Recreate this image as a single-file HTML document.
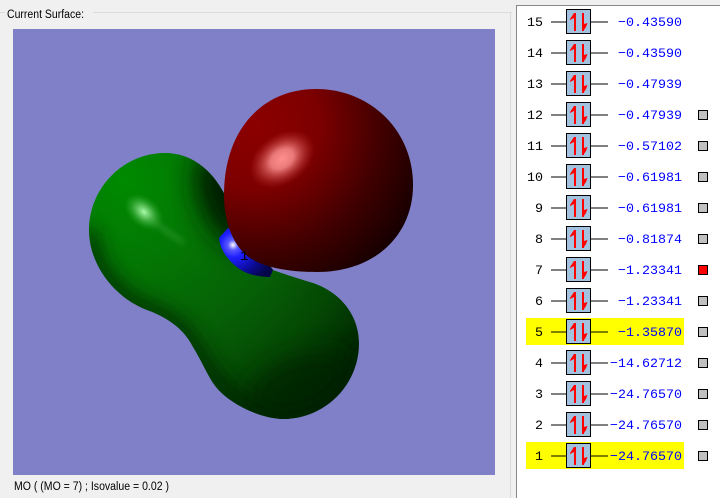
<!DOCTYPE html>
<html><head><meta charset="utf-8"><style>
html,body{margin:0;padding:0;background:#f0f0f0;width:720px;height:498px;overflow:hidden}
svg{display:block}
.m{font-family:"Liberation Mono",monospace;font-size:13.33px}
.s{font-family:"Liberation Sans",sans-serif;font-size:11.5px;fill:#000}
.v{fill:#0000ff;text-anchor:end}
.n{fill:#000;text-anchor:end}
</style></head><body>
<svg width="720" height="498" viewBox="0 0 720 498" xmlns="http://www.w3.org/2000/svg">
<defs>
<radialGradient id="g1" gradientUnits="userSpaceOnUse" cx="125" cy="180" r="310">
<stop offset="0" stop-color="#008a00"/><stop offset=".25" stop-color="#037803"/><stop offset=".55" stop-color="#065f06"/><stop offset=".75" stop-color="#044804"/><stop offset="1" stop-color="#011c01"/></radialGradient>
<radialGradient id="r1" gradientUnits="userSpaceOnUse" cx="255" cy="125" r="185">
<stop offset="0" stop-color="#8c0000"/><stop offset=".35" stop-color="#7c0000"/><stop offset=".7" stop-color="#3e0000"/><stop offset="1" stop-color="#120000"/></radialGradient>
<radialGradient id="b1" gradientUnits="userSpaceOnUse" cx="233" cy="245" r="42">
<stop offset="0" stop-color="#ffffff"/><stop offset=".12" stop-color="#5a5aff"/><stop offset=".3" stop-color="#1e1eff"/><stop offset=".7" stop-color="#0a0a90"/><stop offset="1" stop-color="#05054a"/></radialGradient>
<radialGradient id="h1"><stop offset="0" stop-color="#ff9090"/><stop offset=".35" stop-color="#f58585" stop-opacity=".9"/><stop offset="1" stop-color="#c03030" stop-opacity="0"/></radialGradient>
<radialGradient id="h2"><stop offset="0" stop-color="#a8ffa8"/><stop offset=".35" stop-color="#70d070" stop-opacity=".8"/><stop offset="1" stop-color="#20a020" stop-opacity="0"/></radialGradient>
<filter id="bl" x="-20%" y="-20%" width="140%" height="140%"><feGaussianBlur stdDeviation="9"/></filter>
<filter id="bl2" x="-80%" y="-80%" width="260%" height="260%"><feGaussianBlur stdDeviation="13"/></filter>
<filter id="bl3" x="-50%" y="-200%" width="200%" height="500%"><feGaussianBlur stdDeviation="3"/></filter>
<path id="gp" d="M165 153C190 153 211 168 225 195L273 270C290 276 300 279 313 283C340 292 359 315 359 343C359 385 325 419 283 419C262 419 227 404 213 383C206 372 200 358 193 347C187 335 175 320 147 310C115 298 89 265 89 230C89 188 123 153 165 153Z"/>
<clipPath id="gc"><use href="#gp"/></clipPath>
<g id="ic">
<rect x="566.5" y="-12.5" width="24" height="24" fill="#a3c2e0" stroke="#000"/>
<path d="M551 0H566M591 0H608" stroke="#000" stroke-width="1" fill="none"/>
<path d="M574 -9H576V9H574ZM574 -9L570 -3L570 -2L574 -4Z" fill="#f00"/>
<path d="M582 -9H584V9H582ZM584 8V2L587.5 1L586 5Z" fill="#f00"/>
</g>
</defs>
<rect x="0" y="12" width="5" height="1" fill="#dcdcdc"/>
<rect x="93" y="12" width="419" height="1" fill="#dcdcdc"/>
<rect x="510" y="13" width="1" height="485" fill="#dcdcdc"/>
<text class="s" x="7" y="18" textLength="77" lengthAdjust="spacingAndGlyphs">Current Surface:</text>
<rect x="13" y="29" width="482" height="446" fill="#8080c8"/>
<use href="#gp" fill="url(#g1)"/>
<g clip-path="url(#gc)">
<path d="M89 230C89 265 115 298 147 310C175 320 187 335 193 347C206 372 240 419 283 419C325 419 359 385 359 343" fill="none" stroke="#012001" stroke-width="18" filter="url(#bl)" opacity=".75"/>
<ellipse cx="228" cy="200" rx="28" ry="52" fill="#001c00" filter="url(#bl2)" transform="rotate(-25 228 200)"/>
<ellipse cx="300" cy="385" rx="55" ry="28" fill="#012401" filter="url(#bl2)" opacity=".7" transform="rotate(-20 300 385)"/>
<ellipse cx="144" cy="212" rx="23" ry="15" fill="url(#h2)" transform="rotate(40 144 212)"/>
<ellipse cx="168" cy="232" rx="22" ry="3" fill="#50b050" opacity=".35" filter="url(#bl3)" transform="rotate(35 168 232)"/>
</g>
<path d="M228 228L219 238C220 246 223 252 227 257C233 265 240 270 247 273C255 276 263 277 270 277L273 270L250 240Z" fill="url(#b1)"/>
<path d="M316 89C370 89 413 130 413 185C413 235 375 272 317 272C290 272 265 268 250 258C235 248 224 225 224 195C224 130 262 89 316 89Z" fill="url(#r1)"/>
<ellipse cx="282" cy="159" rx="36" ry="25" fill="url(#h1)" transform="rotate(-35 282 159)"/>
<text x="240" y="260" font-family="Liberation Mono,monospace" font-size="14" fill="#000">1</text>
<text class="s" x="14" y="490" textLength="155" lengthAdjust="spacingAndGlyphs">MO ( (MO = 7) ; Isovalue = 0.02 )</text>

<rect x="516" y="5" width="204" height="493" fill="#fff"/>
<rect x="516" y="5" width="204" height="1" fill="#888"/>
<rect x="516" y="5" width="1" height="493" fill="#888"/>
<rect x="526" y="318" width="158" height="27" fill="#ff0"/>
<rect x="526" y="442" width="158" height="27" fill="#ff0"/>

<use href="#ic" y="22"/><use href="#ic" y="53"/><use href="#ic" y="84"/><use href="#ic" y="115"/><use href="#ic" y="146"/><use href="#ic" y="177"/><use href="#ic" y="208"/><use href="#ic" y="239"/><use href="#ic" y="270"/><use href="#ic" y="301"/><use href="#ic" y="332"/><use href="#ic" y="363"/><use href="#ic" y="394"/><use href="#ic" y="425"/><use href="#ic" y="456"/>

<g class="m">
<text class="n" x="543" y="26">15</text><text class="v" x="682" y="26">−0.43590</text>
<text class="n" x="543" y="57">14</text><text class="v" x="682" y="57">−0.43590</text>
<text class="n" x="543" y="88">13</text><text class="v" x="682" y="88">−0.47939</text>
<text class="n" x="543" y="119">12</text><text class="v" x="682" y="119">−0.47939</text>
<text class="n" x="543" y="150">11</text><text class="v" x="682" y="150">−0.57102</text>
<text class="n" x="543" y="181">10</text><text class="v" x="682" y="181">−0.61981</text>
<text class="n" x="543" y="212">9</text><text class="v" x="682" y="212">−0.61981</text>
<text class="n" x="543" y="243">8</text><text class="v" x="682" y="243">−0.81874</text>
<text class="n" x="543" y="274">7</text><text class="v" x="682" y="274">−1.23341</text>
<text class="n" x="543" y="305">6</text><text class="v" x="682" y="305">−1.23341</text>
<text class="n" x="543" y="336">5</text><text class="v" x="682" y="336">−1.35870</text>
<text class="n" x="543" y="367">4</text><text class="v" x="682" y="367">−14.62712</text>
<text class="n" x="543" y="398">3</text><text class="v" x="682" y="398">−24.76570</text>
<text class="n" x="543" y="429">2</text><text class="v" x="682" y="429">−24.76570</text>
<text class="n" x="543" y="460">1</text><text class="v" x="682" y="460">−24.76570</text>
</g>
<g fill="#c0c0c0" stroke="#000">
<rect x="698.5" y="110.5" width="9" height="9"/>
<rect x="698.5" y="141.5" width="9" height="9"/>
<rect x="698.5" y="172.5" width="9" height="9"/>
<rect x="698.5" y="203.5" width="9" height="9"/>
<rect x="698.5" y="234.5" width="9" height="9"/>
<rect x="698.5" y="265.5" width="9" height="9" fill="#f00"/>
<rect x="698.5" y="296.5" width="9" height="9"/>
<rect x="698.5" y="327.5" width="9" height="9"/>
<rect x="698.5" y="358.5" width="9" height="9"/>
<rect x="698.5" y="389.5" width="9" height="9"/>
<rect x="698.5" y="420.5" width="9" height="9"/>
<rect x="698.5" y="451.5" width="9" height="9"/>
</g>
</svg>
</body></html>
